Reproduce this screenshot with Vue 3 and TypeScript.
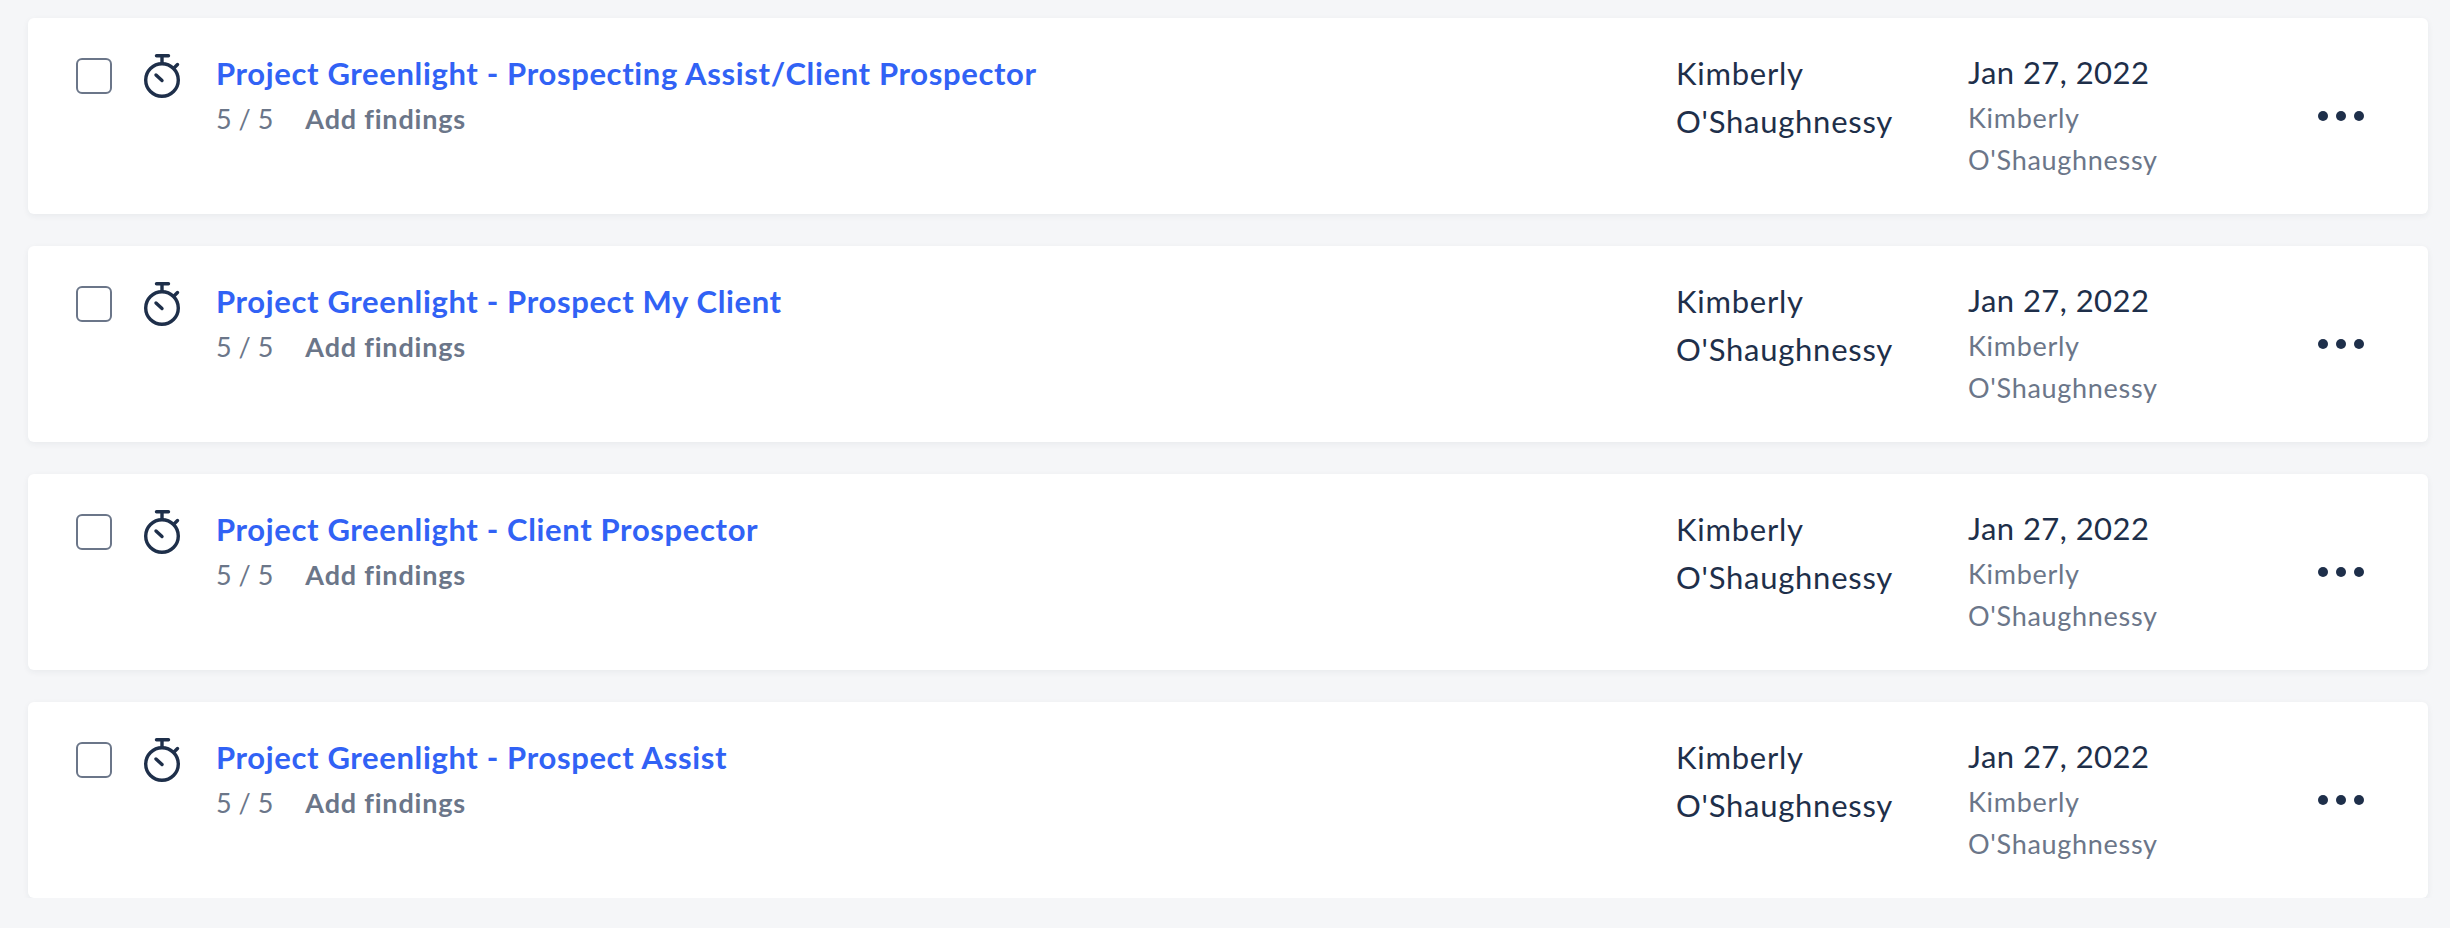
<template>
  <div class="page">
    <div v-for="item in items" :key="item" class="card">
      <span class="checkbox"></span>
      <svg class="timer" width="36" height="44" viewBox="0 0 36 44" fill="none" stroke="#1e2f4a" stroke-width="3.400" stroke-linecap="round">
        <circle cx="18" cy="26" r="16.300" />
        <path d="M12.500 1.700h12" />
        <path d="M18 3v6" />
        <path d="M30 14l3.500-3.500" />
        <path d="M12 21l6 5.500" />
      </svg>
      <div class="main">
        <a class="title">{{ item }}</a>
        <div class="sub">
          <span class="count">5 / 5</span>
          <span class="findings">Add findings</span>
        </div>
      </div>
      <div class="owner">Kimberly O'Shaughnessy</div>
      <div class="date">
        <div class="day">Jan 27, 2022</div>
        <div class="by">Kimberly O'Shaughnessy</div>
      </div>
      <div class="dots"><i></i><i></i><i></i></div>
    </div>
  </div>
</template>

<script setup lang="ts">
const items: string[] = [
  'Project Greenlight - Prospecting Assist/Client Prospector',
  'Project Greenlight - Prospect My Client',
  'Project Greenlight - Client Prospector',
  'Project Greenlight - Prospect Assist',
]
</script>

<style>
body {
  background: #f5f6f8;
}
</style>

<style scoped>
.page {
  display: flex;
  flex-direction: column;
  gap: 32px;
  padding: 18px 22px 0 28px;
  font-family: Lato, "Open Sans", sans-serif;
}

.card {
  display: flex;
  align-items: flex-start;
  height: 196px;
  box-sizing: border-box;
  padding: 36px 0 0 48px;
  background: #fff;
  border-radius: 6px;
  box-shadow: 0 2px 6px rgba(30, 47, 74, 0.06);
}

.checkbox {
  flex: none;
  width: 36px;
  height: 36px;
  margin-top: 4px;
  box-sizing: border-box;
  border: 2px solid #6b7689;
  border-radius: 6px;
}

.timer {
  flex: none;
  margin-left: 32px;
}

.main {
  flex: none;
  width: 1460px;
  margin-left: 36px;
}

.title {
  display: block;
  margin-top: 3px;
  font-size: 31px;
  font-weight: 700;
  letter-spacing: 0.64px;
  line-height: 32px;
  color: #3162f5;
}

.sub {
  display: flex;
  gap: 32px;
  margin-top: 14px;
  font-size: 27px;
  line-height: 32px;
  color: #6b7689;
}

.findings {
  font-weight: 700;
  letter-spacing: 0.8px;
}

.owner {
  flex: none;
  width: 292px;
  box-sizing: border-box;
  padding-right: 50px;
  margin-top: -5px;
  font-size: 31px;
  letter-spacing: 0.75px;
  line-height: 48px;
  color: #1e2f4a;
}

.date {
  flex: none;
  width: 260px;
  box-sizing: border-box;
  padding-right: 30px;
  margin-top: 2px;
}

.day {
  font-size: 31px;
  letter-spacing: 0.45px;
  line-height: 32px;
  color: #1e2f4a;
}

.by {
  margin-top: 9px;
  font-size: 27px;
  letter-spacing: 0.7px;
  line-height: 42px;
  color: #6b7689;
}

.dots {
  display: flex;
  gap: 8px;
  margin: 57px 0 0 90px;
}

.dots i {
  width: 10px;
  height: 10px;
  border-radius: 50%;
  background: #1e2f4a;
}
</style>
